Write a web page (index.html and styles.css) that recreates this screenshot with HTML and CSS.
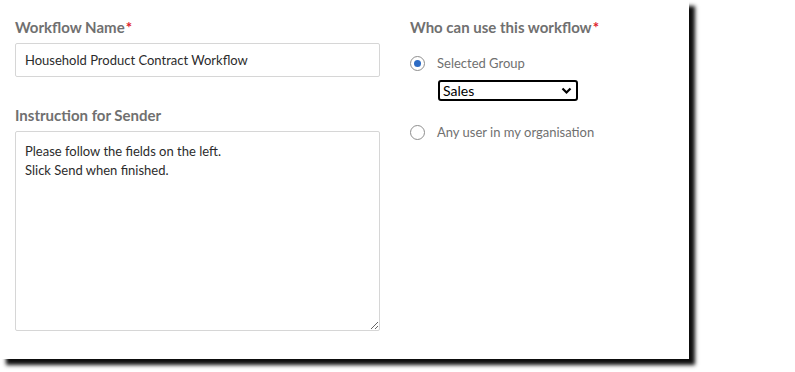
FILE: index.html
```html
<!DOCTYPE html>
<html>
<head>
    <title>Workflow</title>
    <link rel="stylesheet" href="styles.css">
</head>
<body>
    <div class="page">
        <div class="panel">
            <div class="col-left">
                <div class="form-group">
                    <label class="field-label">Workflow Name<span class="req">*</span></label>
                    <input type="text" class="text-input" value="Household Product Contract Workflow">
                </div>
                <div class="form-group">
                    <label class="field-label">Instruction for Sender</label>
                    <textarea class="text-area">Please follow the fields on the left.
Slick Send when finished.</textarea>
                </div>
            </div>
            <div class="col-right">
                <label class="field-label">Who can use this workflow<span class="req">*</span></label>
                <div class="radio-row">
                    <span class="radio checked"></span>
                    <span class="radio-label">Selected Group</span>
                </div>
                <div class="select-box">
                    <span>Sales</span>
                    <svg width="11" height="8" viewBox="0 0 11 8"><path d="M1.5 1.5 L5.5 5.5 L9.5 1.5" fill="none" stroke="#000" stroke-width="2.2"/></svg>
                </div>
                <div class="radio-row second">
                    <span class="radio"></span>
                    <span class="radio-label">Any user in my organisation</span>
                </div>
            </div>
        </div>
    </div>
</body>
</html>
```

FILE: styles.css
```css
body {
    margin: 0;
    background: white;
    font-family: Lato, "Liberation Sans", sans-serif;
}
.page {
    height: 372px;
    overflow: hidden;
}
.panel {
    width: 689px;
    height: 359px;
    background: white;
    box-shadow: 6px 6px 4px rgba(0,0,0,0.95);
    display: flex;
    padding: 18px 0 0 15px;
    box-sizing: border-box;
    gap: 30px;
}
.col-left {
    width: 365px;
}
.form-group {
    margin-bottom: 29px;
}
.field-label {
    display: block;
    font-size: 15px;
    font-weight: bold;
    color: #707070;
    margin-bottom: 7px;
    line-height: 18px;
}
.req {
    color: #e0212b;
    margin-left: 1px;
}
.text-input {
    display: block;
    width: 100%;
    height: 34px;
    box-sizing: border-box;
    border: 1px solid #d6d6d6;
    border-radius: 2px;
    padding: 0 9px;
    font-family: inherit;
    font-size: 13px;
    color: #2c2c2c;
}
.text-area {
    display: block;
    width: 100%;
    height: 200px;
    box-sizing: border-box;
    border: 1px solid #d6d6d6;
    border-radius: 2px;
    padding: 10px 9px;
    font-family: inherit;
    font-size: 13px;
    line-height: 19px;
    color: #2c2c2c;
    margin: 0;
}
.col-right {
    width: 250px;
}
.radio-row {
    display: flex;
    align-items: center;
    gap: 12px;
    margin-top: 19px;
    height: 16px;
}
.radio-row.second {
    margin-top: 23px;
}
.radio {
    width: 15px;
    height: 15px;
    box-sizing: border-box;
    border: 1px solid #8e8e8e;
    border-radius: 50%;
    display: flex;
    align-items: center;
    justify-content: center;
}
.radio.checked::after {
    content: "";
    width: 7px;
    height: 7px;
    border-radius: 50%;
    background: #2d6bc4;
}
.radio-label {
    font-size: 13px;
    color: #707070;
}
.select-box {
    margin: 9px 0 0 28px;
    width: 140px;
    height: 21px;
    box-sizing: border-box;
    border: 2px solid #000;
    border-radius: 3px;
    display: flex;
    align-items: center;
    justify-content: space-between;
    padding: 0 4px 0 3px;
    font-size: 14px;
    color: #000;
}
```
